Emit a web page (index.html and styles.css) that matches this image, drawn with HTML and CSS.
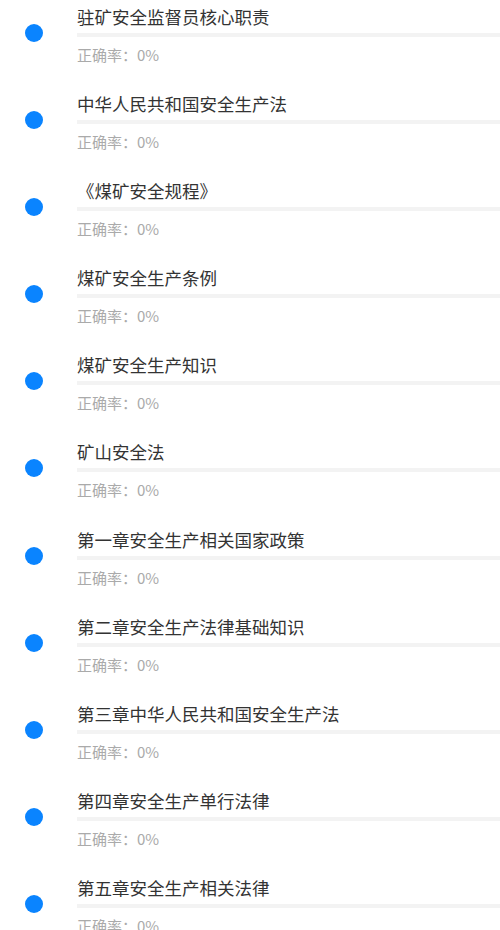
FILE: index.html
```html
<!DOCTYPE html>
<html lang="zh-CN">
<head>
  <meta charset="UTF-8">
  <meta name="viewport" content="width=device-width, initial-scale=1.0">
  <title>章节练习</title>
  <link rel="stylesheet" href="styles.css">
</head>
<body>
  <ul class="chapter-list">
    <li class="chapter">
      <span class="dot"></span>
      <div class="info">
        <div class="title">驻矿安全监督员核心职责</div>
        <div class="bar"><div class="fill" style="width: 0%"></div></div>
        <div class="rate">正确率：0%</div>
      </div>
    </li>
    <li class="chapter">
      <span class="dot"></span>
      <div class="info">
        <div class="title">中华人民共和国安全生产法</div>
        <div class="bar"><div class="fill" style="width: 0%"></div></div>
        <div class="rate">正确率：0%</div>
      </div>
    </li>
    <li class="chapter">
      <span class="dot"></span>
      <div class="info">
        <div class="title">《煤矿安全规程》</div>
        <div class="bar"><div class="fill" style="width: 0%"></div></div>
        <div class="rate">正确率：0%</div>
      </div>
    </li>
    <li class="chapter">
      <span class="dot"></span>
      <div class="info">
        <div class="title">煤矿安全生产条例</div>
        <div class="bar"><div class="fill" style="width: 0%"></div></div>
        <div class="rate">正确率：0%</div>
      </div>
    </li>
    <li class="chapter">
      <span class="dot"></span>
      <div class="info">
        <div class="title">煤矿安全生产知识</div>
        <div class="bar"><div class="fill" style="width: 0%"></div></div>
        <div class="rate">正确率：0%</div>
      </div>
    </li>
    <li class="chapter">
      <span class="dot"></span>
      <div class="info">
        <div class="title">矿山安全法</div>
        <div class="bar"><div class="fill" style="width: 0%"></div></div>
        <div class="rate">正确率：0%</div>
      </div>
    </li>
    <li class="chapter">
      <span class="dot"></span>
      <div class="info">
        <div class="title">第一章安全生产相关国家政策</div>
        <div class="bar"><div class="fill" style="width: 0%"></div></div>
        <div class="rate">正确率：0%</div>
      </div>
    </li>
    <li class="chapter">
      <span class="dot"></span>
      <div class="info">
        <div class="title">第二章安全生产法律基础知识</div>
        <div class="bar"><div class="fill" style="width: 0%"></div></div>
        <div class="rate">正确率：0%</div>
      </div>
    </li>
    <li class="chapter">
      <span class="dot"></span>
      <div class="info">
        <div class="title">第三章中华人民共和国安全生产法</div>
        <div class="bar"><div class="fill" style="width: 0%"></div></div>
        <div class="rate">正确率：0%</div>
      </div>
    </li>
    <li class="chapter">
      <span class="dot"></span>
      <div class="info">
        <div class="title">第四章安全生产单行法律</div>
        <div class="bar"><div class="fill" style="width: 0%"></div></div>
        <div class="rate">正确率：0%</div>
      </div>
    </li>
    <li class="chapter">
      <span class="dot"></span>
      <div class="info">
        <div class="title">第五章安全生产相关法律</div>
        <div class="bar"><div class="fill" style="width: 0%"></div></div>
        <div class="rate">正确率：0%</div>
      </div>
    </li>
  </ul>
</body>
</html>
```

FILE: styles.css
```css
body {
  margin: 0;
  background: #fff;
  font-family: "Noto Sans CJK SC", "Noto Sans", sans-serif;
  overflow: hidden;
}
.chapter-list {
  list-style: none;
  margin: 0;
  padding: 0;
}
.chapter {
  display: flex;
  align-items: flex-start;
  height: 87.1px;
  box-sizing: border-box;
  padding-top: 5px;
}
.dot {
  flex: none;
  width: 18px;
  height: 18px;
  border-radius: 50%;
  background: #0a84ff;
  margin: 19px 34px 0 25px;
}
.info {
  flex: 1;
  min-width: 0;
}
.title {
  font-size: 17.5px;
  line-height: 24px;
  color: #333;
  white-space: nowrap;
}
.bar {
  height: 4px;
  margin-top: 4px;
  background: #f3f3f3;
}
.fill {
  height: 100%;
  background: #0a84ff;
}
.rate {
  margin-top: 8px;
  font-size: 15px;
  line-height: 20px;
  color: #aaa;
}
```
